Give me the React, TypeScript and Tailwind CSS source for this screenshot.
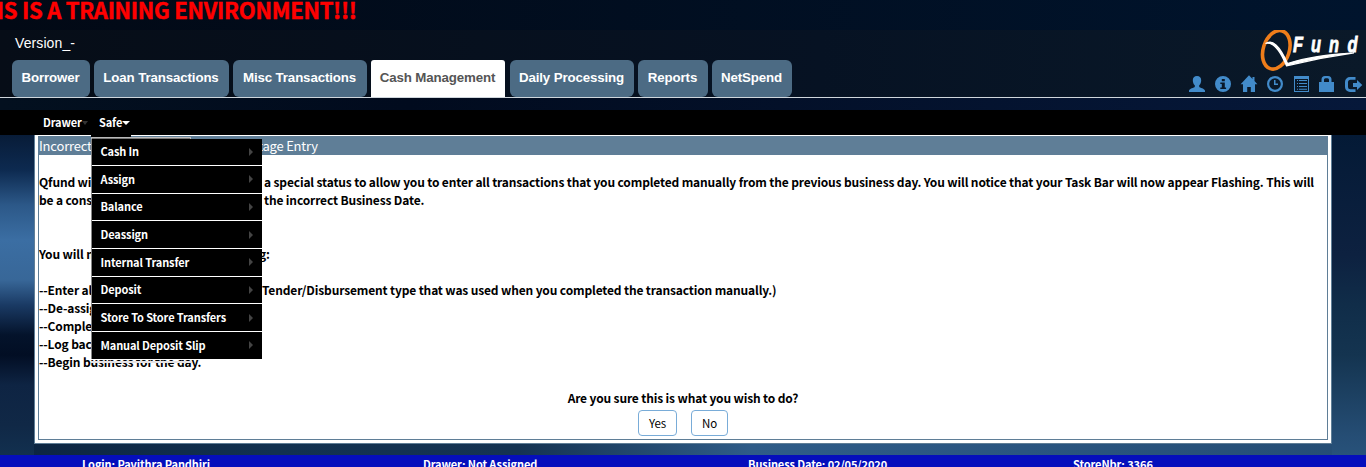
import React from "react";

const tabs = [
  { label: "Borrower", cls: "w-[78px] mr-[4px]" },
  { label: "Loan Transactions", cls: "w-[135px] mr-[4px]" },
  { label: "Misc Transactions", cls: "w-[134px] mr-[4px]" },
  { label: "Cash Management", cls: "w-[134px] mr-[5px]", active: true },
  { label: "Daily Processing", cls: "w-[124px] mr-[4px]" },
  { label: "Reports", cls: "w-[70px] mr-[4px]" },
  { label: "NetSpend", cls: "w-[80px]" },
];

const menu = [
  "Cash In",
  "Assign",
  "Balance",
  "Deassign",
  "Internal Transfer",
  "Deposit",
  "Store To Store Transfers",
  "Manual Deposit Slip",
];

const icons: { name: string; gap: string; body: React.ReactNode }[] = [
  { name: "user", gap: "mr-[10px]", body: <path d="M8 0C5.200 0 3.800 1.800 3.800 4.200c0 2.200.8 4 2 5.100v1.400C5.500 11.800 0 12.500 0 14.800V16h16v-1.200c0-2.300-5.500-3-5.800-4.100V9.300c1.200-1.100 2-2.900 2-5.100C12.200 1.800 10.800 0 8 0z" /> },
  { name: "info", gap: "mr-[10px]", body: <path fillRule="evenodd" d="M8 0a8 8 0 1 0 0 16A8 8 0 0 0 8 0zM6.800 3h3v2.200h-3zM5.300 6.500h4.500v5h1.300V13H5.300v-1.500h1.500V8H5.300z" /> },
  { name: "home", gap: "mr-[10px]", body: <path d="M8-.8L-.4 8.300H2V16h4.200v-5h3.600v5H14V8.300h2.400L13.500 5V1h-2v1.900z" /> },
  { name: "time", gap: "mr-[11px]", body: <path fillRule="evenodd" d="M8 0a8 8 0 1 0 0 16A8 8 0 0 0 8 0zm0 2.200a5.800 5.800 0 1 1 0 11.600A5.800 5.800 0 0 1 8 2.200zM7 4v5h4V7.600H8.500V4z" /> },
  { name: "list", gap: "mr-[9px]", body: <path fillRule="evenodd" d="M0 0h15v16H0zM1 3v12h13V3zM3 4h1v1H3zm2 0h8v1H5zM3 7h1v1H3zm2 0h8v1H5zM3 10h1v1H3zm2 0h8v1H5zM3 12.700h1v1H3zm2 0h8v1H5z" /> },
  { name: "lock", gap: "mr-[10px]", body: <path fillRule="evenodd" d="M2.500 6V3.500A3.500 3.500 0 0 1 6 0h3a3.500 3.500 0 0 1 3.500 3.500V6H15v10H0V6zm2.500 0h5V4c0-1-.6-1.700-1.500-1.700h-2C5.600 2.300 5 3 5 4z" /> },
  { name: "logout", gap: "", body: <path d="M10.500 1H5a5 5 0 0 0-5 5v5a5 5 0 0 0 5 5h5.500v-2.700h-5A2.500 2.500 0 0 1 3 10.800V6.200a2.500 2.500 0 0 1 2.500-2.500h5zM12 4v3H8v4h4v3L17.300 9z" /> },
];

function Logo() {
  return (
    <svg className="block h-[42px] w-[106px]" viewBox="0 0 106 42">
      <ellipse cx="17.300" cy="19.800" rx="13" ry="19.800" transform="rotate(18 17.300 19.800)" fill="none" stroke="#ef7d1a" strokeWidth="3.600" />
      <path d="M6.500 13.500C13 9 20.500 15 28.500 33.500C47 27.500 73 24 95 22.800C72 26 47 31 27.500 35.800C21 20 13.500 11.500 6.500 13.500z" fill="#fff" stroke="#fff" strokeWidth="1.300" />
      <g fill="#fff" stroke="#fff" strokeWidth=".8" fontFamily="Liberation Sans" fontWeight="700" fontStyle="italic" fontSize="21.500">
        <text x="34" y="21.500" textLength="10" lengthAdjust="spacingAndGlyphs">F</text>
        <text x="52" y="21.500" textLength="10" lengthAdjust="spacingAndGlyphs">u</text>
        <text x="70" y="21.500" textLength="10" lengthAdjust="spacingAndGlyphs">n</text>
        <text x="88.500" y="21.500" textLength="10" lengthAdjust="spacingAndGlyphs">d</text>
      </g>
    </svg>
  );
}

function Split({ head, tail, width }: { head: string; tail: string; width: string }) {
  return (
    <div className="flex whitespace-nowrap">
      <span className={"shrink-0 overflow-hidden " + width}>{head}</span>
      <span>{tail}</span>
    </div>
  );
}

export default function App() {
  return (
    <div className="flex h-[467px] w-[1366px] flex-col overflow-hidden bg-[#03102a] font-['Noto_Sans_CJK_SC',sans-serif]">
      <div className="h-[30px] shrink-0 overflow-hidden bg-[linear-gradient(90deg,#020915,#00142d)]">
        <div className="-ml-[33px] -mt-[6px] whitespace-nowrap text-[22px] font-bold leading-[30px] tracking-[-0.27px] text-[#f00] [-webkit-text-stroke:0.5px_#f00]">THIS IS A TRAINING ENVIRONMENT!!!</div>
      </div>
      <header className="flex h-[68px] shrink-0 justify-between border-b border-[#cfd6dc] bg-[linear-gradient(90deg,#060d17_0,#061223_60%,#0a1929_100%)]">
        <div className="pl-[12px] font-['Liberation_Sans',sans-serif]">
          <div className="h-[30px] pl-[3px] pt-[5px] text-[14px] leading-[17px] tracking-[0.1px] text-white">Version_-</div>
          <nav className="flex">
            {tabs.map((t) => (
              <div key={t.label} className={"flex h-[37px] items-center justify-center whitespace-nowrap pb-px pr-px text-[13.3px] font-bold tracking-[-0.13px] " + t.cls + (t.active ? " rounded-t-[3px] bg-white text-[#555]" : " rounded-[6px] bg-[#4c6b84] text-white")}>
                {t.label}
              </div>
            ))}
          </nav>
        </div>
        <div className="w-[177px]">
          <div className="ml-[70px] h-[46px]"><Logo /></div>
          <div className="flex">
            {icons.map((i) => (
              <svg key={i.name} className={"block size-[16px] shrink-0 overflow-visible " + i.gap} viewBox="0 0 16 16" fill="#428bca">{i.body}</svg>
            ))}
          </div>
        </div>
      </header>
      <div className="h-[12px] shrink-0 bg-[linear-gradient(90deg,#03101f,#010b1e_30%,#06183a)]" />
      <div className="relative z-10 flex h-[25px] shrink-0 bg-black pl-[43px] text-[11px] font-bold leading-[25px] tracking-[-0.12px] text-white">
        <div className="flex w-[56px] items-center">Drawer<i className="border-x-[3.500px] border-t-[4px] border-x-transparent border-t-[#333]" /></div>
        <div className="flex items-center">Safe<i className="border-x-[4px] border-t-[4px] border-x-transparent border-t-white" /></div>
        <div className="absolute left-[91px] top-[25px] w-[171px]">
          <div className="h-[2px] w-[40px] bg-black" />
          <div className="h-[2px] w-[100px] border-x border-t border-[#bbb] bg-[#777]" />
          <div className="border-l border-[#888]">
            {menu.map((m, i) => (
              <div key={m} className={"flex items-center justify-between bg-black pl-[8.500px] pr-[9px] " + (i === menu.length - 1 ? "h-[27px]" : i === 0 ? "h-[27px] border-b border-white" : "h-[27.660px] border-b border-white")}>
                <span className={i === 0 ? "-mt-px" : ""}>{m}</span>
                <i className="border-y-[4px] border-l-[4px] border-y-transparent border-l-[#444]" />
              </div>
            ))}
          </div>
          <div className="flex h-[4px] w-[101px] flex-col justify-between"><div className="h-px bg-white" /><div className="h-[2px] bg-[#e6e4e6]" /></div>
        </div>
      </div>
      <main className="flex h-[320px] shrink-0 bg-[linear-gradient(90deg,#0c2440_0,#123150_20%,#153352_38%,#2f5c88_55%,#2a5580_75%,#254d74_100%)]">
        <div className="w-[34px] bg-[linear-gradient(180deg,#081c38_0,#0d2a50_35px,#2c5888_70px,#3b6ea3_105px,#386798_145px,#1a3a64_170px,#04132b_200px,#020e24_220px,#0e2443_250px,#102846_290px,#12304f_320px)]" />
        <div className="h-[309px] w-[1298px] border border-t-0 border-[#5f7e97] bg-white px-[3px] pb-[3px] pt-px">
          <div className="h-[304px] border border-t-0 border-[#5f7e97] text-[12px] font-bold leading-[18px] tracking-[-0.145px] text-black">
            <div className="h-[19px] bg-[#5f7e97] text-[13px] font-normal text-white">
              <div className="flex h-[19px] items-center tracking-[-0.2px]"><Split head="Incorrect" tail="tage Entry" width="w-[219px]" /></div>
            </div>
            <div className="h-[18px]" />
            <Split head="Qfund will" tail="a special status to allow you to enter all transactions that you completed manually from the previous business day. You will notice that your Task Bar will now appear Flashing. This will" width="w-[225px]" />
            <Split head="be a const" tail="the incorrect Business Date." width="w-[225px]" />
            <div className="h-[36px]" />
            <Split head="You will ne" tail="g:" width="w-[220px]" />
            <div className="h-[18px]" />
            <Split head="--Enter all" tail="Tender/Disbursement type that was used when you completed the transaction manually.)" width="w-[223px]" />
            <div>--De-assign</div>
            <div>--Complete</div>
            <div>--Log back</div>
            <div>--Begin business for the day.</div>
            <div className="h-[18px]" />
            <div className="text-center">Are you sure this is what you wish to do?</div>
            <div className="mt-[3px] flex justify-center gap-[14px] text-[11.500px] font-normal">
              <button className="h-[26px] w-[39px] rounded-[4px] border border-[#79acd8]">Yes</button>
              <button className="h-[26px] w-[37px] rounded-[4px] border border-[#79acd8]">No</button>
            </div>
          </div>
        </div>
        <div className="w-[34px] bg-[linear-gradient(180deg,#041a36_0,#0d2140_120px,#102d49_170px,#143450_220px,#254d74_300px,#28527a_320px)]" />
      </main>
      <footer className="flex h-[12px] shrink-0 overflow-hidden bg-[#050ebc] pl-[82px] text-[11px] font-bold leading-[18px] tracking-[-0.1px] text-white">
        <div className="w-[341px]">Login: Pavithra Pandhiri</div>
        <div className="w-[325px]">Drawer: Not Assigned</div>
        <div className="w-[325px]">Business Date: 02/05/2020</div>
        <div>StoreNbr: 3366</div>
      </footer>
    </div>
  );
}
